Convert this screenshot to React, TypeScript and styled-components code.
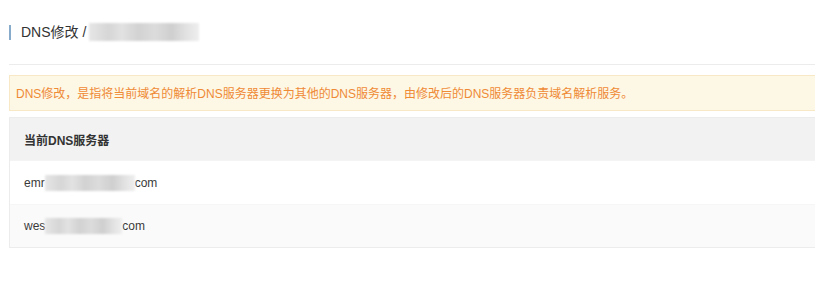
import React from 'react'
import styled, { createGlobalStyle } from 'styled-components'

const GlobalStyle = createGlobalStyle`
  html, body {
    margin: 0;
    padding: 0;
    background: #ffffff;
    font-family: "Liberation Sans", Arial, "Noto Sans CJK SC", sans-serif;
    color: #333333;
  }
`

const servers = [
  { head: 'emr', tail: 'com', blur: 90 },
  { head: 'wes', tail: 'com', blur: 77 },
]

const App = () => {
  return (
    <Page>
      <GlobalStyle />
      <TitleRow>
        <Title>DNS修改 /</Title>
        <Redacted width={110} height={18} />
      </TitleRow>
      <Divider />
      <Alert>
        DNS修改，是指将当前域名的解析DNS服务器更换为其他的DNS服务器，由修改后的DNS服务器负责域名解析服务。
      </Alert>
      <Table>
        <HeaderRow>当前DNS服务器</HeaderRow>
        {servers.map((s, i) => (
          <Row key={i} striped={i % 2 === 1}>
            {s.head}
            <Redacted width={s.blur} height={16} />
            {s.tail}
          </Row>
        ))}
      </Table>
    </Page>
  )
}

const Page = styled.div`
  padding: 23px 0 0 9px;
  height: 305px;
  box-sizing: border-box;
`

const TitleRow = styled.div`
  display: flex;
  align-items: center;
  height: 18px;
`

const Title = styled.div`
  border-left: 2px solid #86abcb;
  padding-left: 10px;
  font-size: 14px;
  line-height: 15px;
  color: #333;
  margin-right: 3px;
`

const Redacted = styled.span<{ width: number; height: number }>`
  display: inline-block;
  width: ${(p) => p.width}px;
  height: ${(p) => p.height}px;
  background: linear-gradient(
    90deg,
    #e6e6e6 0%,
    #d6d6d6 18%,
    #e2e2e2 30%,
    #d2d2d2 45%,
    #dcdcdc 60%,
    #cfcfcf 75%,
    #e4e4e4 90%,
    #eeeeee 100%
  );
  filter: blur(1px);
  vertical-align: middle;
`

const Divider = styled.div`
  margin-top: 23px;
  height: 1px;
  background: #ececec;
`

const Alert = styled.div`
  margin-top: 10px;
  height: 36px;
  box-sizing: border-box;
  padding: 0 6px 1px;
  display: flex;
  align-items: center;
  background: #fdf7e5;
  border: 1px solid #f8e8c6;
  border-right: none;
  color: #ef8a35;
  font-size: 12px;
`

const Table = styled.div`
  margin-top: 6px;
  border: 1px solid #ececec;
  border-right: none;
`

const HeaderRow = styled.div`
  height: 42px;
  display: flex;
  align-items: center;
  padding-left: 14px;
  background: #f2f2f2;
  font-size: 12px;
  font-weight: bold;
  color: #333;
  border-bottom: 1px solid #f4f4f4;
`

const Row = styled.div<{ striped: boolean }>`
  height: 43px;
  display: flex;
  align-items: center;
  padding-left: 14px;
  background: ${(p) => (p.striped ? '#fafafa' : '#ffffff')};
  font-size: 12px;
  color: #3a3a3a;
  border-top: ${(p) => (p.striped ? '1px solid #f6f6f6' : 'none')};
  box-sizing: border-box;
`

export default App
